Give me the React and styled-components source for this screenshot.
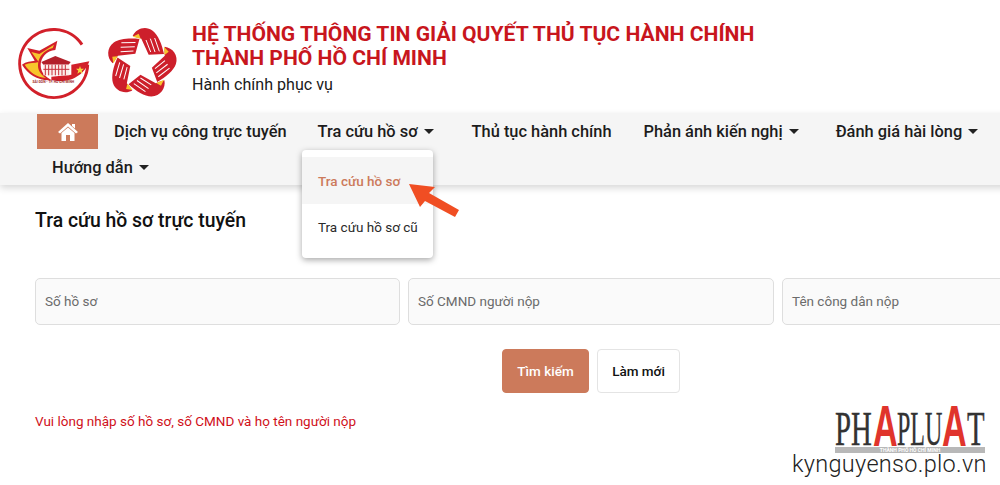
import React from "react"
import styled, { createGlobalStyle } from "styled-components"

const GlobalStyle = createGlobalStyle`
    *{
        font-family: Roboto, "Liberation Sans", sans-serif;
        margin: 0;
        padding: 0;
        box-sizing: border-box;
    }
    html, body{
        width: 1000px;
        height: 485px;
        overflow: hidden;
        background: #fff;
    }
`

const Page = styled.div`
    position: relative;
    width: 1000px;
    height: 485px;
    overflow: hidden;
    background: #fff;
`

const Header = styled.header`
    height: 113px;
    display: flex;
    align-items: flex-start;
    padding: 24px 0 0 14px;
`

const Logos = styled.div`
    display: flex;
    gap: 8px;
    width: 178px;
    flex: none;
`

const Title = styled.h1`
    color: #c8161d;
    font-size: 21.1px;
    line-height: 24px;
    font-weight: 700;
    white-space: nowrap;
    margin-top: -2px;
`

const Slogan = styled.p`
    color: #1a1a1a;
    font-size: 16.1px;
    line-height: 20px;
    margin-top: 5px;
`

const Nav = styled.nav`
    position: relative;
    height: 72px;
    margin-right: -10px;
    background: #f5f5f5;
    box-shadow: 0 3px 7px rgba(0, 0, 0, 0.16);
    padding: 1px 0 0 37px;
    display: flex;
    flex-wrap: wrap;
    align-content: flex-start;
    row-gap: 1px;
`

const HomeButton = styled.a`
    width: 61px;
    height: 35px;
    background: #cc7a5b;
    display: flex;
    align-items: center;
    justify-content: center;
`

const NavItem = styled.a`
    height: 35px;
    padding: 0 ${({ $caret }) => ($caret ? "21px" : "16px")} 0 ${({ $first }) => ($first ? "15px" : "16px")};
    margin: 0 ${({ $pull }) => ($pull ? "1px 0 -1px" : "0")};
    display: flex;
    align-items: center;
    gap: 6px;
    color: #1c1c1c;
    font-size: 16.4px;
    font-weight: 500;
    white-space: nowrap;
`

const Caret = styled.span`
    width: 0;
    height: 0;
    border-left: 5.5px solid transparent;
    border-right: 5.5px solid transparent;
    border-top: 5px solid #222;
`

const Dropdown = styled.div`
    position: absolute;
    left: 302px;
    top: 37px;
    width: 131px;
    height: 108px;
    background: #fff;
    border-radius: 4px;
    box-shadow: 0 2px 6px rgba(0, 0, 0, 0.35);
    padding-top: 7px;
    z-index: 3;
`

const DropdownItem = styled.a`
    height: ${({ $active }) => ($active ? "47px" : "46px")};
    padding-left: 16px;
    display: flex;
    align-items: center;
    font-size: 13.5px;
    font-weight: ${({ $active }) => ($active ? 500 : 400)};
    color: ${({ $active }) => ($active ? "#cc7a5b" : "#2a2a2a")};
    background: ${({ $active }) => ($active ? "#f5f5f5" : "transparent")};
`

const Arrow = styled.svg`
    position: absolute;
    left: 405px;
    top: 182px;
    z-index: 4;
`

const Main = styled.main`
    padding: 25px 0 0 35px;
`

const PageTitle = styled.h2`
    color: #111;
    font-size: 19.4px;
    line-height: 22px;
    font-weight: 500;
`

const Fields = styled.div`
    display: flex;
    gap: 8px;
    margin-top: 46px;
    width: 1100px;
`

const Field = styled.div`
    width: ${({ $width }) => $width}px;
    height: 47px;
    flex: none;
    background: #fafafa;
    border: 1px solid #dedede;
    border-radius: 5px;
    padding: 0 0 2px 9px;
    display: flex;
    align-items: center;
    color: #6b6b6b;
    font-size: 13.5px;
`

const Actions = styled.div`
    display: flex;
    gap: 8px;
    margin: 24px 0 0 467px;
`

const Button = styled.button`
    height: 44px;
    width: ${({ $primary }) => ($primary ? "87px" : "83px")};
    border-radius: 4px;
    border: 1px solid ${({ $primary }) => ($primary ? "#cc7a5b" : "#e4e4e4")};
    background: ${({ $primary }) => ($primary ? "#cc7a5b" : "#fff")};
    color: ${({ $primary }) => ($primary ? "#fff" : "#111")};
    font-size: 13.5px;
    font-weight: 500;
`

const Notice = styled.p`
    color: #d0101a;
    font-size: 13.5px;
    line-height: 16px;
    margin-top: 20px;
`

const Watermark = styled.div`
    position: absolute;
    left: 835px;
    top: 404px;
    width: 150px;
    height: 49px;
    pointer-events: none;
`

const PaperName = styled.div`
    position: absolute;
    left: 0;
    bottom: 6px;
    height: 43px;
    line-height: 43px;
    display: flex;
    align-items: flex-end;
    white-space: nowrap;
`

const PaperPart = styled.span`
    display: block;
    width: ${({ $width }) => $width}px;
    font-family: "Liberation Serif", serif;
    font-size: 48px;
    line-height: 36px;
    color: #333;
    -webkit-text-stroke: 0.4px #333;
    transform: scaleX(${({ $scale }) => $scale});
    transform-origin: left bottom;
`

const TallLetter = styled.span`
    display: block;
    width: ${({ $width }) => $width}px;
    font-family: "Liberation Sans", sans-serif;
    font-size: 57px;
    line-height: 41px;
    font-weight: 700;
    color: #e0342c;
    transform: scaleX(0.6);
    transform-origin: left bottom;
`

const PaperBar = styled.div`
    position: absolute;
    left: 0;
    right: 0;
    bottom: 0;
    height: 6px;
    background: #b8b8b8;
    color: #fff;
    font-size: 5px;
    line-height: 6px;
    font-weight: 700;
    text-align: center;
`

const Site = styled.span`
    position: absolute;
    left: 792px;
    top: 452px;
    font-size: 23.5px;
    line-height: 24px;
    font-weight: 300;
    letter-spacing: 0.3px;
    color: #222;
    white-space: nowrap;
`

const CityLogo = () =>
    <svg width="80" height="80" viewBox="0 0 240 240">
        <path d="M204 62 A102 102 0 1 0 221 122" fill="none" stroke="#d2202a" strokeWidth="9" />
        <path d="M24 122 C36 112 52 112 62 110 L40 72 L76 80 L130 50 L124 78 C98 80 80 100 80 124 C80 146 96 160 112 168 C76 172 42 152 24 122 Z" fill="#d2202a" />
        <path d="M32 122 C46 116 62 118 74 114 L52 84 L76 90 L120 62 L116 72 C90 78 72 100 72 124 C72 140 80 152 96 162 C68 160 46 144 32 122 Z" fill="#f7c52c" />
        <path d="M226 112 L172 122 L172 152 L112 158 L112 168 C150 178 205 168 226 112 Z" fill="#d2202a" />
        <path d="M82 114 L124 96 L170 114 L164 122 L88 122 Z" fill="#b3202a" />
        <rect x="88" y="122" width="78" height="32" fill="#fbeeea" />
        <path d="M94 122 V154 M104 122 V154 M114 122 V154 M124 122 V154 M134 122 V154 M144 122 V154 M154 122 V154 M88 136 H166" stroke="#c8313b" strokeWidth="3" />
        <path d="M198 126 L201 134 L210 134 L203 140 L206 149 L198 144 L190 149 L193 140 L186 134 L195 134 Z" fill="#f7d93c" />
        <text x="118" y="178" fontSize="10" fontWeight="700" textAnchor="middle" fill="#a01c24">SÀI GÒN - TP. HỒ CHÍ MINH</text>
    </svg>

const Hand = ({ angle }) =>
    <g transform={`rotate(${angle} 118 118)`}>
        <path d="M92 36 C102 14 130 4 152 20 C168 32 180 60 186 90 L140 92 L118 44 C110 42 100 39 92 36 Z" fill="#cd1f2b" />
        <path d="M92 38 L110 29 L116 44 Z" fill="#f7c52c" />
        <path d="M132 48 L146 84 M145 44 L159 84 M158 42 L172 82" stroke="#fff" strokeWidth="3" fill="none" />
    </g>

const StarLogo = () =>
    <svg width="80" height="80" viewBox="0 0 240 240">
        {[0, 72, 144, 216, 288].map(angle => <Hand key={angle} angle={angle} />)}
    </svg>

const App = () =>
    <Page>
        <GlobalStyle />
        <Header>
            <Logos>
                <CityLogo />
                <StarLogo />
            </Logos>
            <div>
                <Title>HỆ THỐNG THÔNG TIN GIẢI QUYẾT THỦ TỤC HÀNH CHÍNH<br />THÀNH PHỐ HỒ CHÍ MINH</Title>
                <Slogan>Hành chính phục vụ</Slogan>
            </div>
        </Header>
        <Nav>
            <HomeButton>
                <svg width="20" height="18" viewBox="0 0 20 18" fill="#fff">
                    <path d="M10 0 L20 9 L18 10.500 L10 3.500 L2 10.500 L0 9 Z" />
                    <path d="M3.500 10 L10 4.500 L16.500 10 V18 H12 V12 H8 V18 H3.500 Z" />
                    <path d="M14 1 H17 V5.500 L14 3 Z" />
                </svg>
            </HomeButton>
            <NavItem>Dịch vụ công trực tuyến</NavItem>
            <NavItem $caret $pull>Tra cứu hồ sơ<Caret /></NavItem>
            <NavItem>Thủ tục hành chính</NavItem>
            <NavItem $caret>Phản ánh kiến nghị<Caret /></NavItem>
            <NavItem $caret>Đánh giá hài lòng<Caret /></NavItem>
            <NavItem $caret $first>Hướng dẫn<Caret /></NavItem>
            <Dropdown>
                <DropdownItem $active>Tra cứu hồ sơ</DropdownItem>
                <DropdownItem>Tra cứu hồ sơ cũ</DropdownItem>
            </Dropdown>
        </Nav>
        <Arrow width="56" height="36" viewBox="0 0 56 36">
            <path d="M4 2 L30 5 L24 11 L54 28 L50 35 L20 19 L15 25 Z" fill="#f04e23" />
        </Arrow>
        <Main>
            <PageTitle>Tra cứu hồ sơ trực tuyến</PageTitle>
            <Fields>
                <Field $width={365}>Số hồ sơ</Field>
                <Field $width={366}>Số CMND người nộp</Field>
                <Field $width={300}>Tên công dân nộp</Field>
            </Fields>
            <Actions>
                <Button $primary>Tìm kiếm</Button>
                <Button>Làm mới</Button>
            </Actions>
            <Notice>Vui lòng nhập số hồ sơ, số CMND và họ tên người nộp</Notice>
        </Main>
        <Watermark>
            <PaperName>
                <PaperPart $width={38} $scale={0.6}>PH</PaperPart>
                <TallLetter $width={24}>A</TallLetter>
                <PaperPart $width={45} $scale={0.5}>PLU</PaperPart>
                <TallLetter $width={25}>A</TallLetter>
                <PaperPart $width={18} $scale={0.6}>T</PaperPart>
            </PaperName>
            <PaperBar>THÀNH PHỐ HỒ CHÍ MINH</PaperBar>
        </Watermark>
        <Site>kynguyenso.plo.vn</Site>
    </Page>

export default App
